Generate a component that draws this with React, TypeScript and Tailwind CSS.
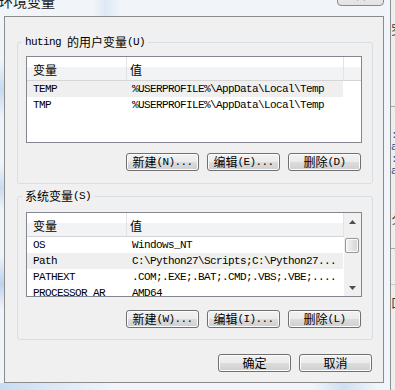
import React from "react";

const CJK = "font-['Noto_Sans_CJK_SC',sans-serif]";
const MONO = "font-['Liberation_Mono',monospace] text-[11px] tracking-[-0.6px]";

function Btn({ zh, hk }: { zh: string; hk?: string }) {
  return (
    <div className="w-[73px] h-[18px] rounded-[3px] border border-[#707070] bg-[linear-gradient(to_bottom,#f2f2f2_0%,#ebebeb_50%,#dddddd_50%,#cfcfcf_100%)] shadow-[inset_0_0_0_1px_#fcfcfc] flex items-center justify-center text-black">
      <span className={`${CJK} text-[12px] leading-none`}>{zh}</span>
      {hk && <span className={`${MONO} leading-none`}>{hk}</span>}
    </div>
  );
}

function Header({ filler }: { filler?: boolean }) {
  return (
    <div className="h-[24px] shrink-0 flex border-b border-[#d5d5d5] bg-[linear-gradient(to_bottom,#ffffff_0%,#ffffff_42%,#f2f3f5_42%,#f2f3f5_100%)]">
      <div className={`w-[100px] border-r border-[#e3e3e3] pl-[6px] pt-[2px] flex items-center ${CJK} text-[12px] text-black`}>变量</div>
      <div className={`w-[217px] border-r border-[#e3e3e3] pl-[3px] pt-[2px] flex items-center ${CJK} text-[12px] text-black`}>值</div>
      {filler && <div className="flex-1" />}
    </div>
  );
}

function Row({ a, b, sel }: { a: string; b: string; sel?: boolean }) {
  return (
    <div className={`h-[16px] shrink-0 flex ${MONO} text-black`}>
      <div className={`w-[316px] h-full flex items-center ${sel ? "bg-[#efefef]" : ""}`}>
        <div className="w-[100px] pl-[6px] overflow-hidden whitespace-nowrap">{a}</div>
        <div className="w-[216px] pl-[5px] overflow-hidden whitespace-nowrap">{b}</div>
      </div>
    </div>
  );
}

function Arrow({ down }: { down?: boolean }) {
  return (
    <svg width="7" height="4" viewBox="0 0 7 4">
      <polygon points={down ? "0,0 7,0 3.5,4" : "0,4 7,4 3.5,0"} fill="#4f4f4f" />
    </svg>
  );
}

function Group({
  label,
  children,
  pt,
}: {
  label: React.ReactNode;
  children: React.ReactNode;
  pt: string;
}) {
  return (
    <div className={`relative w-[356px] ml-[12px] border border-[#d5dfe5] rounded-[3px] pl-[8px] pr-[10px] ${pt}`}>
      <div className="absolute left-[4px] top-[-9px] h-[16px] px-[3px] bg-[#f0f0f0] flex items-center text-black whitespace-nowrap">
        {label}
      </div>
      {children}
    </div>
  );
}

export default function App() {
  return (
    <div className="w-[395px] h-[390px] overflow-hidden flex bg-[#edf2f8]">
      {/* main window column */}
      <div className="w-[390px] h-full flex flex-col">
        {/* title strip */}
        <div className="h-[16px] shrink-0 flex items-start bg-[linear-gradient(to_right,#f1f5fa_0%,#f1f5fa_24%,#dde9f5_27%,#f1f5fa_31%,#f1f5fa_100%)]">
          <div className={`${CJK} text-[14px] leading-[20px] -mt-[9px] -ml-[1px] text-[#1a1a1a]`}>环境变量</div>
          <div className="flex-1" />
          <div className="w-[47px] h-[20px] -mt-[14px] mr-[6px] rounded-[4px] border border-[#8a8a8a] bg-[linear-gradient(to_bottom,#f4f4f4,#e2e2e2)] flex justify-center">
            <svg width="10" height="14" viewBox="0 0 10 14" className="mt-[1px]">
              <path d="M1 2 L9 12 M9 2 L1 12" stroke="#3a3a3a" strokeWidth="2" />
            </svg>
          </div>
        </div>
        {/* body */}
        <div className="h-[367px] shrink-0 flex">
          <div className="w-[4px] h-full bg-[linear-gradient(to_bottom,#f1f5fa_0%,#f1f5fa_12%,#c6daf0_20%,#f1f5fa_28%,#f1f5fa_40%,#c9dcf0_47%,#f1f5fa_53%,#f1f5fa_65%,#bcd3ec_73%,#f1f5fa_80%,#f1f5fa_100%)]" />
          <div className="w-[380px] h-full border border-[#8b8b8b] bg-[#f0f0f0] flex flex-col">
            <div className="h-[25px] shrink-0" />
            <Group
              pt="pt-[13px] pb-[12px]"
              label={
                <>
                  <span className={MONO}>huting&nbsp;</span>
                  <span className={`${CJK} text-[12px]`}>的用户变量</span>
                  <span className={MONO}>(U)</span>
                </>
              }
            >
              <div className="h-[87px] border border-[#828790] bg-white flex flex-col overflow-hidden">
                <Header filler />
                <Row a="TEMP" b={"%USERPROFILE%\\AppData\\Local\\Temp"} sel />
                <Row a="TMP" b={"%USERPROFILE%\\AppData\\Local\\Temp"} />
              </div>
              <div className="mt-[10px] flex justify-end gap-[8px] pr-[1px]">
                <Btn zh="新建" hk="(N)..." />
                <Btn zh="编辑" hk="(E)..." />
                <Btn zh="删除" hk="(D)" />
              </div>
            </Group>
            <div className="h-[12px] shrink-0" />
            <Group
              pt="pt-[15px] pb-[11px]"
              label={
                <>
                  <span className={`${CJK} text-[12px]`}>系统变量</span>
                  <span className={MONO}>(S)</span>
                </>
              }
            >
              <div className="h-[85px] border border-[#828790] bg-white flex overflow-hidden">
                <div className="w-[317px] flex flex-col overflow-hidden">
                  <Header />
                  <Row a="OS" b="Windows_NT" />
                  <Row a="Path" b={"C:\\Python27\\Scripts;C:\\Python27..."} sel />
                  <Row a="PATHEXT" b=".COM;.EXE;.BAT;.CMD;.VBS;.VBE;...." />
                  <Row a="PROCESSOR_AR" b="AMD64" />
                </div>
                <div className="w-[17px] h-full flex flex-col bg-[#f0f0f0]">
                  <div className="h-[17px] shrink-0 flex items-center justify-center pt-[1px]">
                    <Arrow />
                  </div>
                  <div className="flex-1 pt-[8px] px-[1px]">
                    <div className="h-[15px] w-[14px] rounded-[2px] border border-[#979797] bg-[linear-gradient(to_right,#f4f4f4,#e4e4e4_50%,#d4d4d4)] shadow-[inset_0_0_0_1px_#fafafa]" />
                  </div>
                  <div className="h-[17px] shrink-0 flex items-center justify-center">
                    <Arrow down />
                  </div>
                </div>
              </div>
              <div className="mt-[13px] flex justify-end gap-[8px] pr-[1px]">
                <Btn zh="新建" hk="(W)..." />
                <Btn zh="编辑" hk="(I)..." />
                <Btn zh="删除" hk="(L)" />
              </div>
            </Group>
            <div className="h-[14px] shrink-0" />
            <div className="flex justify-end gap-[8px] pr-[11px]">
              <Btn zh="确定" />
              <Btn zh="取消" />
            </div>
          </div>
          <div className="w-[6px] h-full bg-[#f1f5fa]" />
        </div>
        {/* bottom strip */}
        <div className="flex-1 bg-[linear-gradient(to_right,#c9dcf0_0%,#e4edf7_20%,#f1f5fa_30%,#f1f5fa_80%,#d0e0f1_88%,#f1f5fa_97%)]" />
      </div>
      {/* window edge */}
      <div className="w-[1px] h-full bg-[#8f8f8f]" />
      {/* background window sliver */}
      <div className="w-[4px] h-full bg-[#eeeeee] flex flex-col overflow-hidden">
        <div className="h-[24px] shrink-0" />
        <div className={`${CJK} text-[12px] leading-[12px] text-[#333] whitespace-nowrap`}>罗</div>
        <div className="h-[71px] shrink-0 border-b border-[#a8a8a8]" />
        <div className="h-[22px] shrink-0" />
        <div className={`${MONO} leading-[12px] text-[#2b4a8c] whitespace-nowrap`}>:</div>
        <div className={`${MONO} leading-[12px] text-[#2b4a8c] whitespace-nowrap`}>a</div>
        <div className={`${MONO} leading-[12px] text-[#2b4a8c] whitespace-nowrap`}>:</div>
        <div className={`${MONO} leading-[12px] text-[#2b4a8c] whitespace-nowrap`}>a</div>
        <div className="h-[36px] shrink-0" />
        <div className={`${CJK} text-[12px] leading-[12px] text-[#333] whitespace-nowrap`}>夕</div>
        <div className="h-[24px] shrink-0 border-b border-[#a8a8a8]" />
        <div className="h-[36px] shrink-0 border-b border-[#c8c8c8]" />
        <div className="h-[12px] shrink-0" />
        <div className={`${CJK} text-[12px] leading-[12px] text-[#333] whitespace-nowrap`}>口</div>
      </div>
    </div>
  );
}
